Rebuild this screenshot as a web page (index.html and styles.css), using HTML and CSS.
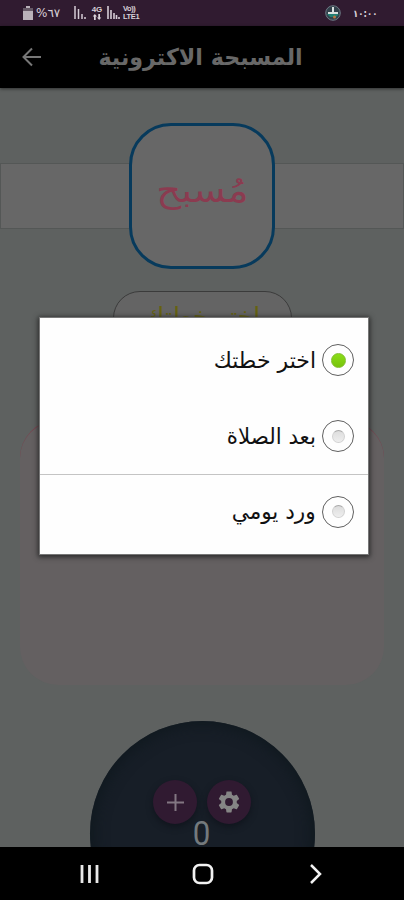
FILE: index.html
```html
<!DOCTYPE html>
<html lang="ar">
<head>
<meta charset="utf-8">
<title>المسبحة الاكترونية</title>
<link rel="stylesheet" href="styles.css">
</head>
<body>
<div class="screen">
  <div class="status">
    <svg class="battery" width="10" height="14" viewBox="0 0 10 14"><path d="M3 0h4v2h3v12H0V2h3z" fill="#b9b1b9"/><path d="M0 2h10v3H0z" fill="#655966"/></svg>
    <span class="percent" dir="ltr">%٦٧</span>
    <svg class="signal" width="12" height="14" viewBox="0 0 12 14"><path d="M1 0v13M4.500 3v10M8 8v5M11 11v2" stroke="#d5ccd5" stroke-width="1.500"/></svg>
    <span class="net"><b>4G</b><svg width="10" height="6" viewBox="0 0 10 7"><path d="M0 3L2.500 0 5 3H3.500v4h-2V3zM5 4h1.500V0h2v4H10L7.500 7z" fill="#ddd5dd"/></svg></span>
    <svg class="signal two" width="13" height="14" viewBox="0 0 13 14"><path d="M1 0v13M4 4v9M7 7v6M9.500 9v4M12 11v2" stroke="#d5ccd5" stroke-width="1.600"/></svg>
    <span class="lte"><b>Vo))</b><b>LTE1</b></span>
    <svg class="badge" width="16" height="16" viewBox="0 0 16 16"><circle cx="8" cy="8" r="7.300" fill="#32414b" stroke="#6c7883"/><path d="M2 9h12l-3 3H5z" fill="#217f73"/><path d="M8 2v7M3 8h10" stroke="#d9e0df" stroke-width="2"/><circle cx="9.500" cy="12" r="1.500" fill="#b97540"/></svg>
    <span class="time">١٠:٠٠</span>
  </div>
  <header class="bar">
    <svg class="back" width="20" height="20" viewBox="0 0 20 20"><path d="M19 10H2M10 1.500L1.500 10l8.500 8.500" fill="none" stroke="#777" stroke-width="2"/></svg>
    <h1 dir="rtl">المسبحة الاكترونية</h1>
  </header>
  <main class="content">
    <div class="band"><div class="logo"><span dir="rtl">مُسبح</span></div></div>
    <div class="chip" dir="rtl">اختر خطتك</div>
    <div class="panel"></div>
    <div class="counter">
      <div class="actions">
        <span class="round"><svg width="17" height="17" viewBox="0 0 17 17"><path d="M8.500 0v17M0 8.500h17" stroke="#827682" stroke-width="2"/></svg></span>
        <span class="round"><svg width="26" height="26" viewBox="0 0 24 24"><path fill="#858585" d="M19.140 12.940c.04-.3.060-.61.060-.94s-.02-.64-.07-.94l2.030-1.580c.18-.14.230-.41.120-.61l-1.920-3.320c-.12-.22-.37-.29-.59-.22l-2.390.96c-.5-.38-1.030-.7-1.620-.94L14.400 2.810c-.04-.24-.24-.41-.48-.41h-3.840c-.24 0-.43.17-.47.41L9.250 5.350c-.59.24-1.130.57-1.620.94l-2.390-.96c-.22-.08-.47 0-.59.220L2.740 8.870c-.12.21-.08.470.12.610l2.030 1.580c-.05.3-.09.630-.09.940s.02.640.070.940l-2.030 1.580c-.18.140-.23.410-.12.610l1.920 3.320c.12.220.370.290.590.220l2.390-.96c.5.380 1.030.7 1.620.940l.36 2.540c.05.240.240.410.480.410h3.840c.24 0 .44-.17.470-.41l.36-2.540c.59-.24 1.130-.56 1.620-.94l2.390.96c.22.080.470 0 .59-.22l1.920-3.320c.12-.22.070-.47-.12-.61zM12 15.600A3.600 3.600 0 1 1 12 8.400a3.600 3.600 0 0 1 0 7.200z"/></svg></span>
      </div>
      <span class="count">0</span>
    </div>
  </main>
  <nav class="nav">
    <svg width="20" height="20" viewBox="0 0 20 20"><path d="M2 1v18M9.500 1v18M17 1v18" stroke="#e8e8e8" stroke-width="2.800"/></svg>
    <svg width="22" height="22" viewBox="0 0 22 22"><rect x="2" y="2" width="18" height="18" rx="5.500" fill="none" stroke="#f2f2f2" stroke-width="2.700"/></svg>
    <svg width="20" height="20" viewBox="0 0 20 20"><path d="M5 1l9 9-9 9" fill="none" stroke="#f2f2f2" stroke-width="2.500"/></svg>
  </nav>
  <div class="dialog" dir="rtl">
    <div class="option"><i class="radio on"></i><span class="t1">اختر خطتك</span></div>
    <div class="option"><i class="radio"></i><span class="t2">بعد الصلاة</span></div>
    <div class="option last"><i class="radio"></i><span class="t3">ورد يومي</span></div>
  </div>
</div>
</body>
</html>
```
FILE: styles.css
```css
* { box-sizing: border-box; }
body { margin: 0; font-family: "DejaVu Sans", sans-serif; }
svg { display: block; flex: none; }
.screen { position: relative; width: 404px; height: 900px; overflow: hidden; display: flex; flex-direction: column; background: #5e6160; }
.status { height: 26px; flex: none; display: flex; align-items: center; padding: 0 26px 0 23px; background: #301b30; color: #d8d0d8; }
.percent { font-size: 12px; margin-left: 3px; width: 27px; white-space: nowrap; }
.signal { margin-left: 11px; }
.net { width: 12px; margin-left: 5px; display: flex; flex-direction: column; align-items: center; }
.net b, .lte b { font: bold 8px/8px "Liberation Sans", sans-serif; }
.signal.two { margin-left: 4px; }
.lte { margin-left: 3px; display: flex; flex-direction: column; }
.lte b { font-size: 7.5px; letter-spacing: -.4px; }
.badge { margin-left: auto; }
.time { margin-left: 12px; font-size: 10px; font-weight: bold; width: 25px; white-space: nowrap; transform: scaleX(.86); transform-origin: left; }
.bar { height: 62px; flex: none; display: flex; align-items: center; padding: 0 101px 0 22px; background: #000; box-shadow: 0 1px 3px rgba(0,0,0,.5); z-index: 1; }
h1 { margin: 0 0 0 auto; font-size: 23px; line-height: 40px; color: #686868; white-space: nowrap; transform: scaleX(.965); transform-origin: right; }
.content { height: 759px; flex: none; overflow: hidden; display: flex; flex-direction: column; align-items: center; padding-top: 75px; }
.band { width: 404px; height: 66px; flex: none; display: flex; align-items: center; justify-content: center; background: #676767; border: 1px solid #545756; }
.logo { width: 146px; height: 146px; flex: none; border: 3px solid #073a5c; border-radius: 42px; background: #676767; display: flex; align-items: center; justify-content: center; color: #8b3b50; font-size: 34px; }
.logo span { margin-bottom: 13px; transform: scaleX(1.14); }
.chip { width: 179px; height: 54px; flex: none; margin-top: 62px; border: 1px solid #3b3b3b; border-radius: 28px; background: #646464; color: #66620f; font-size: 25px; line-height: 50px; text-align: center; }
.panel { width: 364px; height: 265px; flex: none; margin-top: 75px; border-radius: 38px; background: #646061; border-top: 1px solid #823b4a; }
.counter { width: 225px; height: 225px; flex: none; margin-top: 36px; border-radius: 50%; background: #171e27; box-shadow: inset 0 0 14px 4px #10191f; display: flex; flex-direction: column; align-items: center; padding-top: 59px; }
.actions { display: flex; gap: 10px; }
.round { width: 44px; height: 44px; border-radius: 50%; background: #301a31; box-shadow: 0 3px 6px #10151d; display: flex; align-items: center; justify-content: center; }
.count { font: 34px/30px Roboto, sans-serif; color: #747a7d; margin-top: -6px; transform: scaleX(.92); }
.nav { height: 53px; flex: none; display: flex; align-items: center; justify-content: space-between; padding: 0 78px 0 80px; background: #000; }
.dialog { position: absolute; left: 39px; top: 317px; width: 330px; height: 238px; padding-top: 4px; background: #fefefe; border: 1px solid #777; box-shadow: 0 1px 5px 1px #292929; }
.option { height: 76px; display: flex; align-items: center; padding-right: 14px; gap: 6px; color: #111; white-space: nowrap; }
.option.last { height: 74px; border-top: 1px solid #c4c4c4; }
.radio { width: 32px; height: 32px; flex: none; border: 1.500px solid #606060; border-radius: 50%; display: flex; align-items: center; justify-content: center; }
.radio::after { content: ""; width: 11px; height: 11px; border-radius: 50%; background: linear-gradient(#ddd, #eee); border: 1px solid #d2d2d2; border-top-color: #aaa; }
.radio.on::after { width: 13px; height: 13px; background: linear-gradient(#8add18, #78c40b); border: 1px solid #80bd2c; }
.option span { font-size: 22px; transform-origin: right; }
.t2 { transform: scaleX(.97); }
.t3 { transform: scaleX(.98); }
```
